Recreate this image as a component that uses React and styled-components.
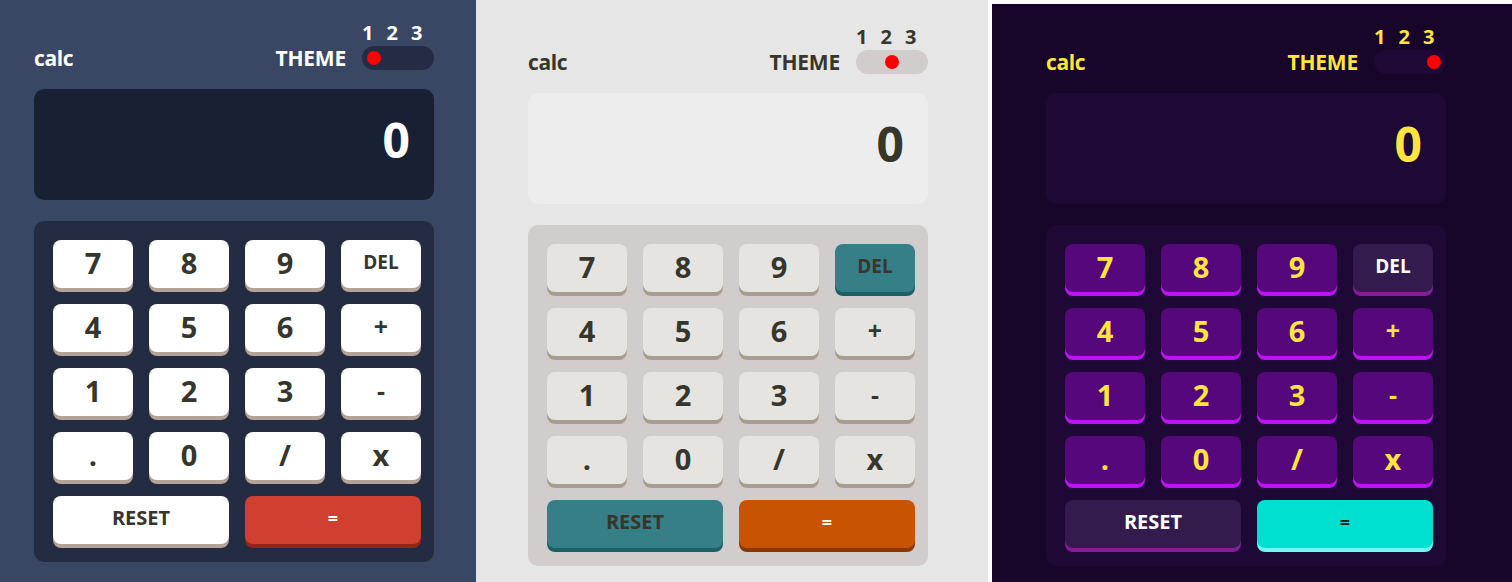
import React from 'react'
import styled, { createGlobalStyle, ThemeProvider } from 'styled-components'

const GlobalStyle = createGlobalStyle`
  html, body {
    margin: 0;
    padding: 0;
    background: #ffffff;
  }

  body {
    font-family: 'Open Sans', 'Liberation Sans', sans-serif;
    font-weight: 700;
  }
`

const themes = [
  {
    bg: '#3a4764',
    well: '#232c43',
    screen: '#182034',
    head: '#ffffff',
    screenText: '#ffffff',
    key: '#ffffff',
    keyShadow: '#b3a497',
    keyText: '#36362c',
    alt: '#ffffff',
    altShadow: '#b3a497',
    altText: '#36362c',
    accent: '#d03f2f',
    accentShadow: '#93261a',
    accentText: '#ffffff',
    dot: 'flex-start',
    panel: { width: 476, top: 24, left: 34, frame: 0 },
  },
  {
    bg: '#e6e6e6',
    well: '#d2cdcd',
    screen: '#ededed',
    head: '#36362c',
    screenText: '#36362c',
    key: '#e5e4e0',
    keyShadow: '#a79e91',
    keyText: '#36362c',
    alt: '#377f86',
    altShadow: '#1b6066',
    altText: '#36362c',
    accent: '#c85402',
    accentShadow: '#8a3801',
    accentText: '#ffffff',
    dot: 'center',
    panel: { width: 512, top: 28, left: 52, frame: 0 },
  },
  {
    bg: '#17062a',
    well: '#1e0836',
    screen: '#1e0836',
    head: '#ffe53d',
    screenText: '#ffe53d',
    key: '#56077c',
    keyShadow: '#bc15f4',
    keyText: '#ffe53d',
    alt: '#331c4d',
    altShadow: '#881c9e',
    altText: '#ffffff',
    accent: '#00e0d1',
    accentShadow: '#6cf9f2',
    accentText: '#1a2327',
    dot: 'flex-end',
    panel: { width: 524, top: 24, left: 54, frame: 4 },
  },
]

const Page = styled.div`
  display: flex;
  height: 582px;
  overflow: hidden;
`

const Panel = styled.section`
  box-sizing: border-box;
  flex: none;
  width: ${({ theme }) => theme.panel.width}px;
  height: 582px;
  padding: ${({ theme }) => `${theme.panel.top}px 0 0 ${theme.panel.left}px`};
  background: ${({ theme }) => theme.bg};
  border-left: ${({ theme }) => theme.panel.frame}px solid #ffffff;
  border-top: ${({ theme }) => theme.panel.frame}px solid #ffffff;
`

const Calculator = styled.div`
  width: 400px;
`

const Header = styled.header`
  display: flex;
  justify-content: space-between;
  align-items: flex-end;
  height: 46px;
  margin-bottom: 19px;
  color: ${({ theme }) => theme.head};
`

const Logo = styled.span`
  font-size: 21px;
  line-height: 24px;
  letter-spacing: -0.4px;
`

const ThemeGroup = styled.div`
  display: flex;
  align-items: flex-end;
  gap: 16px;
`

const ThemeLabel = styled.span`
  font-size: 21px;
  line-height: 24px;
  letter-spacing: -0.2px;
`

const Switch = styled.div`
  display: flex;
  flex-direction: column;
  width: 72px;
`

const Numbers = styled.div`
  display: flex;
  gap: 13px;
  height: 20px;
  margin-bottom: 2px;
  font-size: 20px;
  line-height: 18px;
`

const Track = styled.div`
  box-sizing: border-box;
  display: flex;
  align-items: center;
  justify-content: ${({ theme }) => theme.dot};
  height: 24px;
  padding: 0 5px;
  border-radius: 12px;
  background: ${({ theme }) => theme.well};
`

const Dot = styled.span`
  width: 14px;
  height: 14px;
  border-radius: 50%;
  background: #ff0000;
`

const Screen = styled.div`
  box-sizing: border-box;
  display: flex;
  align-items: center;
  justify-content: flex-end;
  height: 111px;
  padding: 0 24px 10px;
  margin-bottom: 21px;
  border-radius: 10px;
  background: ${({ theme }) => theme.screen};
  color: ${({ theme }) => theme.screenText};
  font-size: 48px;
`

const Keypad = styled.div`
  display: grid;
  grid-template-columns: repeat(4, 80px);
  grid-auto-rows: 48px;
  gap: 16px;
  height: 341px;
  box-sizing: border-box;
  padding: 19px 13px 18px 19px;
  border-radius: 10px;
  background: ${({ theme }) => theme.well};
`

const tones = {
  key: t => [t.key, t.keyShadow, t.keyText],
  alt: t => [t.alt, t.altShadow, t.altText],
  accent: t => [t.accent, t.accentShadow, t.accentText],
}

const Key = styled.button`
  grid-column: span ${({ $span }) => $span || 1};
  display: flex;
  align-items: center;
  justify-content: center;
  height: 48px;
  padding: 0 0 4px;
  border: none;
  border-radius: 8px;
  font-family: inherit;
  font-weight: 700;
  font-size: ${({ $size }) => $size || 29}px;
  line-height: 1;
  cursor: pointer;
  background: ${({ theme, $tone }) => tones[$tone || 'key'](theme)[0]};
  box-shadow: 0 4px 0 ${({ theme, $tone }) => tones[$tone || 'key'](theme)[1]};
  color: ${({ theme, $tone }) => tones[$tone || 'key'](theme)[2]};
`

const rows = [
  ['7', '8', '9', 'DEL'],
  ['4', '5', '6', '+'],
  ['1', '2', '3', '-'],
  ['.', '0', '/', 'x'],
]

function Calc({ theme }) {
  return (
    <ThemeProvider theme={theme}>
      <Panel>
        <Calculator>
          <Header>
            <Logo>calc</Logo>
            <ThemeGroup>
              <ThemeLabel>THEME</ThemeLabel>
              <Switch>
                <Numbers>
                  <span>1</span>
                  <span>2</span>
                  <span>3</span>
                </Numbers>
                <Track>
                  <Dot />
                </Track>
              </Switch>
            </ThemeGroup>
          </Header>
          <Screen>0</Screen>
          <Keypad>
            {rows.flat().map(label =>
              label === 'DEL' ? (
                <Key key={label} $tone="alt" $size={19}>
                  DEL
                </Key>
              ) : (
                <Key key={label} $size={label === '+' || label === '-' ? 25 : 29}>
                  {label}
                </Key>
              )
            )}
            <Key $span={2} $tone="alt" $size={20}>
              RESET
            </Key>
            <Key $span={2} $tone="accent" $size={18}>
              =
            </Key>
          </Keypad>
        </Calculator>
      </Panel>
    </ThemeProvider>
  )
}

export default function App() {
  return (
    <Page>
      <GlobalStyle />
      {themes.map((t, i) => (
        <Calc key={i} theme={t} />
      ))}
    </Page>
  )
}
